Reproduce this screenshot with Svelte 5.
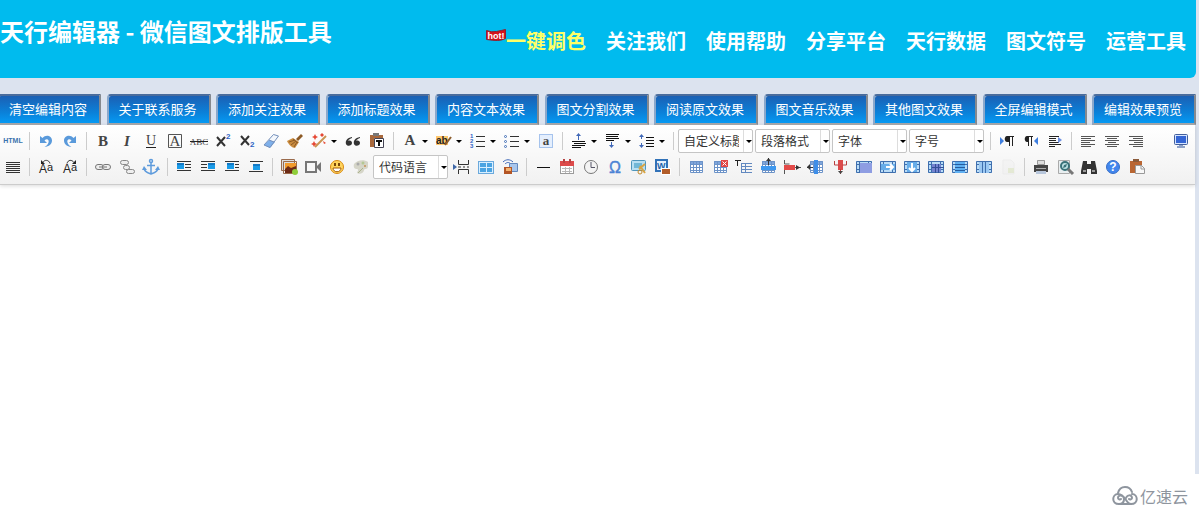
<script>
  const navLinks = ['关注我们', '使用帮助', '分享平台', '天行数据', '图文符号', '运营工具']

  const tabs = [
    '清空编辑内容',
    '关于联系服务',
    '添加关注效果',
    '添加标题效果',
    '内容文本效果',
    '图文分割效果',
    '阅读原文效果',
    '图文音乐效果',
    '其他图文效果',
    '全屏编辑模式',
    '编辑效果预览',
  ]

  // shared pieces of the svg icons, all on a 20x20 grid
  const lines = (d, c = '#333', w = 1) => `<path d="${d}" stroke="${c}" stroke-width="${w}" fill="none"/>`
  const fill = (d, c) => `<path d="${d}" fill="${c}"/>`
  const text = (t, x, y, size, extra = '') =>
    `<text x="${x}" y="${y}" font-size="${size}" ${extra}>${t}</text>`
  const serif = 'font-family="Liberation Serif, serif" font-weight="bold" fill="#444" text-anchor="middle"'
  const sans = 'font-family="Liberation Sans, sans-serif" fill="#222"'
  const digit = 'font-family="Liberation Sans, sans-serif" font-weight="bold" fill="#2d62c4"'

  const grid = (c = '#6c93c8') =>
    fill('M4 4h13v12H4z', '#fff') +
    fill('M4 4h13v3H4z', '#7fa6dc') +
    lines('M4.5 4.5h12v11h-12zM4 7.5h13M4 10.5h13M4 13.5h13M7.5 4v12M10.5 4v12M13.5 4v12', c)
  const frame = (inner, bg = '#b9dcf7') =>
    fill('M2 4h16v12H2z', bg) +
    lines('M2.5 4.5h15v11h-15zM2 7.5h3M2 12.5h3M15 7.5h3M15 12.5h3M5.5 4v12M14.5 4v12', '#3f6fae') +
    inner
  const pic = (x, y) =>
    `<rect x="${x}" y="${y}" width="7" height="6" fill="#1a9be8"/><rect x="${x}" y="${y}" width="7" height="2" fill="#1479c4"/>`

  const icons = {
    source: text('HTML', 10, 12, 7, 'font-family="Liberation Sans, sans-serif" font-weight="bold" fill="#3b73ae" text-anchor="middle"'),
    undo: fill('M4 5v7h7L8.5 9.5C11 7 13.5 9 12.5 11.5 12 13.5 10 15 8.5 16 13 15.5 16 13 16 9.5 16 5 10 3 6.5 7z', '#5a9adb'),
    redo: fill('M16 5v7H9l2.5-2.5C9 7 6.5 9 7.5 11.5 8 13.5 10 15 11.5 16 7 15.5 4 13 4 9.5 4 5 10 3 13.5 7z', '#5a9adb'),
    bold: text('B', 10, 15, 15, serif),
    italic: text('I', 10, 15, 15, serif + ' font-style="italic"'),
    underline: text('U', 10, 14, 14, serif.replace('bold', 'normal')) + lines('M5 16.5h10', '#222'),
    fontborder: text('A', 10, 15, 15, serif.replace('bold', 'normal')) + lines('M3.5 3.5h13v13h-13z', '#555'),
    strike: text('ABC', 10, 14, 9, serif.replace('bold', 'normal')) + lines('M1 10.5h18', '#222'),
    superscript: lines('M4 6l8 9M12 6l-8 9', '#333', 2) + text('2', 13, 8, 8, digit),
    subscript: lines('M4 5l8 9M12 5l-8 9', '#333', 2) + text('2', 13, 16, 8, digit),
    eraser: fill('M13 3l5 2-9 12-6-3z', '#f4f8fd') + fill('M8 9l6 2-5 6-6-3z', '#7fb0ea') + lines('M12.5 3.5L17.5 5 9 16.5 3 14zM8 9l5 2', '#7590bb'),
    broom: fill('M16 3l2 2-5 5-2-2z', '#8d5a25') + fill('M8 7l6 4-4 6C7 17 4 14 2 10z', '#c98b3e') + lines('M8 8l5 4M4 11l6-2M6 14l5-4M9 16l3-5', '#8d5a25'),
    autoformat: lines('M17 5L6 16', '#c99452', 2) + fill('M5 5l1-2 1 2 2 1-2 1-1 2-1-2-2-1zM12 3l1-1 1 1 1 1-1 1-1 1-1-1-1-1zM4 12l1-2 1 2 2 1-2 1-1 2-1-2-2-1zM14 10l3 2-2 1z', '#e64834'),
    quote: fill('M9 6C4 7 2 10 3 13c1 3 6 2 6-1 0-2-2-3-4-2 1-2 2-2 4-3zM17 6c-5 1-7 4-6 7 1 3 6 2 6-1 0-2-2-3-4-2 1-2 2-2 4-3z', '#333'),
    pasteplain: fill('M3 4h13v12H3z', '#a8683c') + fill('M6 2h6v3H6z', '#777') + fill('M7 7h10v10H7z', '#fff') + lines('M7.5 7.5h9v9h-9z', '#445') + lines('M9 10h6M12 10v5', '#111', 2),
    forecolor: text('A', 10, 14, 15, serif),
    backcolor: fill('M2 5h12v9H2z', '#ffc86d') + text('ab', 2, 13, 10, sans + ' font-weight="bold"') + lines('M17 6l-6 8', '#8b5c2b', 2),
    ol: text('1', 2, 7, 6, digit) + text('2', 2, 12, 6, digit) + text('3', 2, 17, 6, digit) + lines('M8 5.5h9M8 10.5h9M8 15.5h9'),
    ul: `<g fill="none" stroke="#426fb8"><circle cx="3.5" cy="5.5" r="1"/><circle cx="3.5" cy="10.5" r="1"/><circle cx="3.5" cy="15.5" r="1"/></g>` + lines('M8 5.5h9M8 10.5h9M8 15.5h9'),
    selectall: `<rect x="3.5" y="3.5" width="13" height="13" fill="#e5effd" stroke="#5b91dd" stroke-dasharray="1 1"/>` + text('a', 10, 14, 13, serif),
    rowtop: lines('M3 10.5h13M5 12.5h12M3 14.5h13M3 16.5h9', '#111') + lines('M9.5 4v5', '#4169b8') + fill('M7 5l2.5-3L12 5z', '#4169b8'),
    rowbottom: lines('M3 3.5h13M3 5.5h12M3 7.5h13M3 9.5h8', '#111') + lines('M8.5 11v4', '#4169b8') + fill('M6 14l2.5 3L11 14z', '#4169b8'),
    lineheight: lines('M9 6.5h8M9 9.5h8M9 12.5h8M9 15.5h8', '#111') + lines('M4.5 4v4M4.5 12v4', '#4169b8') + fill('M2 6l2.5-3L7 6zM2 14l2.5 3L7 14z', '#4169b8'),
    ltr: fill('M3 6v8l4-4z', '#3f7fe0') + lines('M12.5 5v10M15.5 5v10M11 5.5h6', '#222') + fill('M12 5h-2c-3 0-3 6 0 6h2z', '#222'),
    rtl: fill('M17 6v8l-4-4z', '#3f7fe0') + lines('M7.5 5v10M10.5 5v10M6 5.5h6', '#222') + fill('M7 5H6C3 5 3 11 6 11h1z', '#222'),
    indent: lines('M4 5.5h10M4 7.5h7M4 9.5h7M4 11.5h10M4 13.5h12M4 15.5h6', '#222') + fill('M13 6l4 3-4 3z', '#6c8fe0'),
    left: lines('M3 5.5h14M3 7.5h10M3 9.5h14M3 11.5h9M3 13.5h14M3 15.5h10', '#555'),
    center: lines('M3 5.5h14M5 7.5h10M3 9.5h14M6 11.5h8M3 13.5h14M5 15.5h10', '#555'),
    right: lines('M3 5.5h14M7 7.5h10M3 9.5h14M8 11.5h9M3 13.5h14M7 15.5h10', '#555'),
    fullscreen: `<rect x="3.5" y="3.5" width="13" height="10" rx="1" fill="#d6e5ff" stroke="#435f9b"/><rect x="5" y="5" width="10" height="7" fill="#3465d4"/>` + fill('M8 14h4v1h2v2H6v-2h2z', '#8fa3c9'),
    justify: lines('M3 5.5h14M3 7.5h14M3 9.5h14M3 11.5h14M3 13.5h14M3 15.5h14'),
    uppercase: text('A', 3, 16, 12, sans) + text('a', 11, 14, 11, sans) + lines('M7 5.5c1-3 6-3 7 1') + fill('M5 3v4h4z', '#222'),
    lowercase: text('A', 3, 16, 12, sans) + text('a', 11, 14, 11, sans) + lines('M7 6.5c1-4 5-4 7-1') + fill('M16 3v4h-4z', '#222'),
    link: `<g fill="#eee" stroke="#777"><rect x="2.5" y="7.5" width="8" height="5" rx="2.5"/><rect x="9.5" y="7.5" width="8" height="5" rx="2.5"/></g>` + lines('M6 10h8', '#777'),
    unlink: `<g fill="#eee" stroke="#888"><rect x="3.5" y="3.5" width="8" height="4" rx="2"/><rect x="6.5" y="8.5" width="6" height="4" rx="2"/><rect x="9.5" y="12.5" width="8" height="4" rx="2"/></g>`,
    anchor: `<g fill="none" stroke="#5e9bdc" stroke-width="1.5"><circle cx="10" cy="4" r="1.5"/><path d="M10 6v11M6 8.500h8M3 11c0 4 4 5 7 6 3-1 7-2 7-6"/></g>` + fill('M1 13l2-4 3 4zM14 13l3-4 2 4z', '#5e9bdc'),
    imgleft: pic(3, 6) + lines('M3 4.5h14M11 7.5h6M11 10.5h6M3 13.5h14'),
    imgright: pic(10, 6) + lines('M3 4.5h14M3 7.5h6M3 10.5h6M3 13.5h14'),
    imgnone: pic(5, 6) + lines('M3 4.5h14M13 7.5h4M13 10.5h4M3 13.5h14'),
    imgcenter: pic(7, 7) + lines('M4 4.5h13M3 14.5h14'),
    image: fill('M2 3h14v11H2z', '#ddd') + lines('M2.5 2.5h13v11h-13zM4.5 4.5h13v12h-13z', '#9a6b4c') + fill('M6 6h11v10H6z', '#f29b2c') + fill('M6 12l3-3 3 2 5-2v7H6z', '#6d2b16') + `<circle cx="16" cy="15" r="3" fill="#8fce3a"/>`,
    video: fill('M2 4h12v12H2zM14 9l4-4v10l-4-4z', '#777') + fill('M4 6h8v8H4z', '#f8f8f8'),
    emotion: `<circle cx="10" cy="10" r="6.5" fill="#ffd45c" stroke="#d98a12"/><path d="M6 11h8c0 5-8 5-8 0z" fill="#fff" stroke="#a45c08"/>` + fill('M7 6h2v3H7zM11 6h2v3h-2z', '#7a4709'),
    scrawl: fill('M3 7c3-4 10-5 14-2v5c-1 3-3 1-4 3 0 3-5 5-7 3 1-3 2-3 0-4-2 0-4-1-3-5z', '#d5d5c8') + `<circle cx="7" cy="7" r="1.5" fill="#aaa"/><circle cx="12" cy="6" r="1.5" fill="#b4c894"/><circle cx="14" cy="9" r="1" fill="#c49056"/>` + lines('M7 16l5-5', '#abb38d'),
    pagebreak: fill('M1 7l4 3-4 3z', '#3f68a8') + lines('M6.5 3v4.5h10V3M6.5 17v-4.5h10V17M6 10h3M11 10h2M15 10h2'),
    template: `<rect x="2.5" y="4.5" width="15" height="12" fill="#d9efff" stroke="#6ba9dc"/><path d="M4 6h6v4H4zM11 6h5v4h-5zM4 11h6v4H4zM11 11h5v4h-5z" fill="#4ba4e2"/>`,
    webapp: lines('M3 5c3-3 7-3 10 0M5 7c2-2 4-2 6 0', '#3f68b8') + fill('M9 6h8v8H9z', '#a9c6ec') + lines('M9.5 6.5h8v8h-8z', '#6388bd') + fill('M4 10h8v7H4z', '#b35525') + fill('M6 11h5v3H6z', '#f4b36f'),
    hr: lines('M4 10.5h13', '#111'),
    date: `<rect x="3.5" y="4.5" width="13" height="12" fill="#fff" stroke="#9b9b9b"/><path d="M3 4h14v5H3z" fill="#dd4b4b"/>` + fill('M6 2h2v4H6zM12 2h2v4h-2z', '#b74343') + lines('M5 11.5h10M5 14.5h10M8.5 10v6M12.5 10v6', '#b9b9b9'),
    time: `<circle cx="10" cy="10" r="6.5" fill="#f3f3f3" stroke="#777"/><path d="M10 5v5.500h4" fill="none" stroke="#556"/>`,
    spechars: text('Ω', 10, 16, 16, 'font-family="Liberation Sans, sans-serif" fill="#4b83d4" stroke="#4b83d4" stroke-width=".4" text-anchor="middle"'),
    snapscreen: `<rect x="2.5" y="3.5" width="14" height="10" rx="1" fill="#b8dff2" stroke="#4f95bb"/><path d="M5 6h8v5H5z" fill="#71b7d6"/><path d="M10 12l6-5M11 9l5 7" stroke="#d8a443" stroke-width="2"/><circle cx="11" cy="15" r="2" fill="none" stroke="#c28a2d"/>`,
    wordimage: fill('M2 2h13v13H2z', '#3172b8') + fill('M4 4h9v9H4z', '#e6f0fb') + text('W', 4, 12, 9, 'font-family="Liberation Sans" font-weight="bold" fill="#2163a9"') + fill('M8 11h10v7H8z', '#fff') + fill('M9 12h8v5H9z', '#b25d29'),
    inserttable: grid(),
    deletetable: grid() + fill('M11 3h7v7h-7z', '#e04545') + lines('M12.5 4.5l4 4M16.5 4.5l-4 4', '#fff'),
    tabletitle: lines('M1 3.5h6M3.5 3v6', '#222') + lines('M7 6.5h11M7 9.5h11M7 12.5h11M7 15.5h11M7.5 6v10M11.5 6v10', '#6289c0'),
    insertrow: grid() + fill('M3 9h15v4H3z', '#3e98ef') + lines('M10.5 1v7') + fill('M8 4l2.5-3L13 4z', '#333'),
    deleterow: fill('M2 8h11v5H2z', '#e24a49') + lines('M2.5 3v4h5M2.5 17v-4M13 10.5h6', '#555') + fill('M14 8v5l4-2.500z', '#333'),
    insertcol: grid() + fill('M8 3h4v14H8z', '#3e8ee8') + lines('M1 10.5h6') + fill('M1 10l3-3v6z', '#333'),
    deletecol: fill('M8 3h5v10H8z', '#dc4b4b') + lines('M4.5 4v4h4M16.5 4v4h-4M10.5 12v5', '#b94141') + fill('M8 14l2.5 3 2.5-3z', '#444'),
    mergecells: frame(fill('M6 6h12v10H6z', '#8e9de2')),
    mergeright: frame(fill('M3 7h14v6H3z', '#67ade9') + lines('M8 10h7M12 7l3 3-3 3', '#fff', 2)),
    mergedown: frame(fill('M5 5h10v10H5z', '#67ade9') + lines('M10 6v8M7 11l3 3 3-3', '#fff', 2)),
    splitcells: frame(fill('M6 7h9v8H6z', '#7583d0') + lines('M6 10.5h12M9.5 7v9M12.5 7v9', '#344f98')),
    splitrows: frame(fill('M5 5h10v11H5z', '#5eb0f2') + lines('M5 7.5h10M5 10.5h10M5 13.5h10', '#285d9e')),
    splitcols: frame(fill('M5 5h10v11H5z', '#9bc8f2') + lines('M8.5 4v12M11.5 4v12', '#3f6fae')),
    charts: `<g opacity=".35"><path d="M5 3h8l3 3v11H5z" fill="#eee" stroke="#ddd"/><path d="M10 11h6v5h-6z" fill="#c7d69b"/></g>`,
    print: fill('M6 3h8v5H6z', '#ddd') + lines('M6.5 3.5h7v4h-7z', '#999') + fill('M3 8h14v7H3z', '#444') + fill('M5 11h10v1H5z', '#aaa') + fill('M5 14h10v3H5z', '#b8c7dc'),
    preview: fill('M3 3h11v14H3z', '#e8eef0') + lines('M3.5 3.5h11v13h-11z', '#aaa') + `<circle cx="10" cy="9" r="4" fill="#bfe2e4" stroke="#397279" stroke-width="2"/><path d="M13 12l5 5" stroke="#777" stroke-width="3"/><path d="M8 11l1-3 3-1-1 3z" fill="#397279"/>`,
    search: fill('M4 4h4v3h4V4h4l2 10v3h-6v-5H8v5H2v-3z', '#333') + fill('M4 13h3v2H4zM13 13h3v2h-3z', '#999'),
    help: `<circle cx="10" cy="10" r="6.5" fill="#4286ed" stroke="#376fc7"/>` + text('?', 10, 14, 12, 'font-family="Liberation Sans" font-weight="bold" fill="#fff" text-anchor="middle"'),
    drafts: fill('M3 4h12v12H3z', '#b96633') + fill('M6 2h6v3H6z', '#8b5b3a') + `<path d="M8.500 8.500h6l3 3v5h-9z" fill="#f8f8f8" stroke="#999"/><path d="M14 8v4h4" fill="none" stroke="#999"/>`,
  }

  // '|' is a separator, a trailing ':v' marks a drop-down button, '#' a combo box
  const rows = [
    'source | undo redo | bold italic underline fontborder strike superscript subscript eraser broom autoformat:v quote pasteplain | forecolor:v backcolor:v ol:v ul:v selectall | rowtop:v rowbottom:v lineheight:v | #自定义标题 #段落格式 #字体 #字号 | ltr rtl indent | left center right fullscreen',
    'justify | uppercase lowercase | link unlink anchor | imgleft imgright imgnone imgcenter | image video emotion scrawl #代码语言 pagebreak template webapp | hr date time spechars snapscreen wordimage | inserttable deletetable tabletitle insertrow deleterow insertcol deletecol mergecells mergeright mergedown splitcells splitrows splitcols charts | print preview search help drafts',
  ].map((row) => row.split(' '))
</script>

<div class="page">
  <header>
    <h1>天行编辑器 - 微信图文排版工具</h1>
    <nav>
      <a class="hot" href="#color">
        <svg width="20" height="14" viewBox="0 0 20 14" aria-hidden="true">
          <path d="M.5 1.500q5 2 10 1t9-2v9q-4 2-8 2t-11-1z" fill="#d5131b" stroke="#8d2030" />
          <text x="10" y="10" text-anchor="middle" font-size="9" font-family="Liberation Sans" fill="#fff">hot!</text>
        </svg>
        <span>一键调色</span>
      </a>
      {#each navLinks as link}
        <a href="#{link}">{link}</a>
      {/each}
    </nav>
  </header>

  <div class="tabs">
    {#each tabs as tab}
      <button class="tab">{tab}</button>
    {/each}
  </div>

  <main>
    <div class="toolbar">
      {#each rows as row}
        <div class="row">
          {#each row as item}
            {#if item === '|'}
              <span class="sep"></span>
            {:else if item[0] === '#'}
              <div class="combo">
                <select aria-label={item.slice(1)}>
                  <option>{item.slice(1)}</option>
                </select>
                <i class="arrow"></i>
              </div>
            {:else}
              {@const name = item.split(':')[0]}
              <button class="tool" class:last={name === 'fullscreen'} aria-label={name}>
                <svg width="20" height="20" viewBox="0 0 20 20">{@html icons[name]}</svg>
                {#if item.endsWith(':v')}<i class="arrow"></i>{/if}
              </button>
            {/if}
          {/each}
        </div>
      {/each}
    </div>
    <textarea aria-label="content"></textarea>
  </main>
</div>

<footer>
  <svg width="26" height="20" viewBox="0 0 26 20" aria-hidden="true">
    <g fill="none" stroke="#8e959e" stroke-width="2" stroke-linecap="round">
      <path d="M6 7C7 3 10 1 13 1s6 2 7 5" />
      <path d="M9 13c-1 1-3 0-3-1 0-4 6-3 6 1 0 3-2 5-5 5-8 0-7-10-1-10 4 0 6 3 8 6s3 4 5 4" />
      <path d="M17 13c1 1 3 0 3-1 0-4-5-3-6 0M19 18c8 0 7-10 1-10" />
      <path d="M7 18h12" />
    </g>
  </svg>
  <span>亿速云</span>
</footer>

<style>
  :global(body) {
    margin: 0;
    background: #fff;
    font-family: 'Noto Sans CJK SC', sans-serif;
    overflow: hidden;
  }
  .page {
    background: #dce3ef;
    padding-right: 3px;
  }
  header {
    display: flex;
    justify-content: space-between;
    height: 78px;
    box-sizing: border-box;
    padding: 13px 10px 0 0;
    background: #00bbee;
    border-radius: 0 0 6px 0;
    color: #fff;
  }
  h1 {
    margin: 0;
    font-size: 24px;
    line-height: 36px;
    white-space: nowrap;
  }
  nav {
    display: flex;
    gap: 20px;
    padding-top: 13px;
  }
  nav a {
    color: #fff;
    font-size: 20px;
    font-weight: bold;
    line-height: 30px;
    text-decoration: none;
    white-space: nowrap;
  }
  nav .hot {
    display: flex;
    color: #ffff66;
  }
  .hot svg {
    margin-top: 3px;
  }
  .tabs {
    display: flex;
    justify-content: space-between;
    margin-left: -3px;
    padding-top: 16px;
  }
  .tab {
    width: 104px;
    height: 31px;
    padding: 0 2px 2px 0;
    border: 2px solid #85898f;
    border-top-color: #4a6c9c;
    border-left-color: #8ba8cb;
    border-bottom-color: #a3a5a8;
    border-radius: 4px 0 0 0;
    background: linear-gradient(#1b60b4, #0b80d8 60%, #0599f3) padding-box;
    color: #fff;
    font-family: inherit;
    font-size: 13px;
    line-height: 24px;
    white-space: nowrap;
  }
  main {
    margin-right: 1px;
    background: #fff;
  }
  .toolbar {
    padding: 3px 2px 4px 1px;
    border-bottom: 1px solid #ccc;
    background: linear-gradient(#fff, #f1f1f1);
    box-shadow: 0 1px 4px rgba(0, 0, 0, 0.15);
  }
  .row {
    display: flex;
    align-items: center;
    height: 26px;
  }
  .tool {
    display: flex;
    flex: none;
    align-items: center;
    padding: 0 2px;
    border: 0;
    background: none;
  }
  .tool.last {
    margin-left: auto;
  }
  .arrow {
    width: 0;
    height: 0;
    border: 3px solid transparent;
    border-top-color: #000;
    border-bottom: 0;
  }
  .tool .arrow {
    margin: 0 2px;
  }
  .sep {
    flex: none;
    width: 1px;
    height: 18px;
    margin: 0 4px;
    background: #ccc;
  }
  .combo {
    display: flex;
    align-items: center;
    box-sizing: border-box;
    flex: none;
    width: 75px;
    height: 24px;
    margin-right: 2px;
    border: 1px solid #c5c5c5;
    border-radius: 2px;
    background: #fff;
  }
  select {
    appearance: none;
    width: 65px;
    height: 22px;
    padding: 0 4px 2px 5px;
    border: 0;
    border-right: 1px solid #ddd;
    background: none;
    color: #333;
    font-family: inherit;
    font-size: 12px;
  }
  .combo .arrow {
    margin-left: 2px;
  }
  textarea {
    display: block;
    width: 100%;
    height: 289px;
    box-sizing: border-box;
    border: 0;
    outline: 0;
    background: none;
    resize: none;
  }
  footer {
    display: flex;
    align-items: center;
    justify-content: flex-end;
    height: 44px;
    gap: 2px;
    padding-right: 11px;
    color: #8e959e;
    font-size: 16px;
  }
</style>
